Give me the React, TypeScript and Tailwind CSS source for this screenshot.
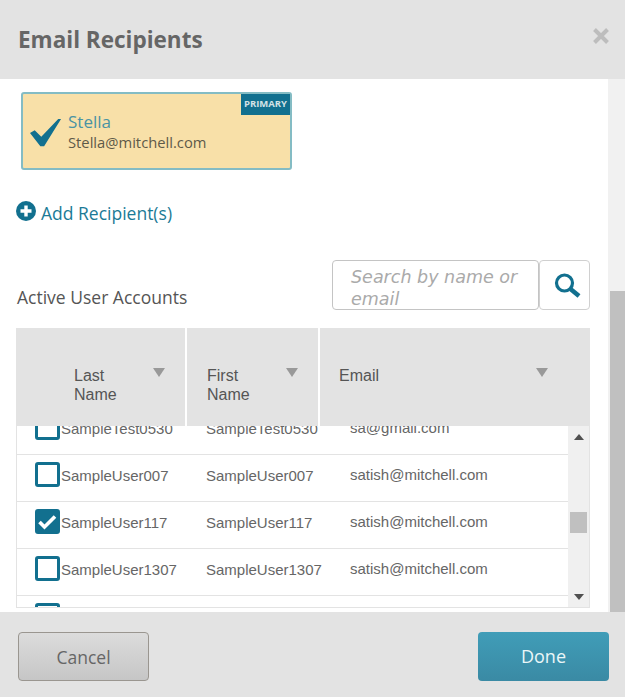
import React from 'react'

type Row = {
  last: string
  first: string
  email: string
  checked?: boolean
}

const rows: Row[] = [
  { last: 'SampleTest0530', first: 'SampleTest0530', email: 'sa@gmail.com' },
  { last: 'SampleUser007', first: 'SampleUser007', email: 'satish@mitchell.com' },
  { last: 'SampleUser117', first: 'SampleUser117', email: 'satish@mitchell.com', checked: true },
  { last: 'SampleUser1307', first: 'SampleUser1307', email: 'satish@mitchell.com' },
  { last: '', first: '', email: '' },
]

const SortArrow = () => (
  <svg width="12" height="9" viewBox="0 0 12 9" className="shrink-0">
    <path d="M0 0h12L6 9z" fill="#999999" />
  </svg>
)

const Checkbox = ({ checked }: { checked?: boolean }) => (
  <div className={`w-[25px] h-[25px] shrink-0 rounded-[3px] border-[3px] border-[#12708f] flex items-center justify-center ${checked ? 'bg-[#12708f]' : 'bg-white'}`}>
    {checked && (
      <svg width="19" height="16" viewBox="0 0 19 16">
        <path d="M1.5 8l5 5L17 2.5" fill="none" stroke="#ffffff" strokeWidth="3.6" />
      </svg>
    )}
  </div>
)

const App = () => {
  return (
    <div className="w-[625px] h-[697px] flex flex-col overflow-hidden bg-white font-['Open_Sans',sans-serif]">
      <div className="h-[79px] shrink-0 bg-[#e3e3e3] flex items-center justify-between pl-[18px] pr-[15px]">
        <h1 className="text-[22.5px] font-bold text-[#666666]">Email Recipients</h1>
        <svg width="18" height="18" viewBox="0 0 18 18" className="mb-[7px]">
          <path d="M2.5 2.5l13 13M15.5 2.5l-13 13" stroke="#bdbdbd" strokeWidth="4" />
        </svg>
      </div>

      <div className="h-[533px] shrink-0 flex">
        <div className="w-[608px] shrink-0 overflow-hidden">
          <div className="pt-[13px] pl-[21px]">
            <div className="relative w-[271px] h-[78px] bg-[#f8e0a8] border-[2px] border-[#84bcc4] rounded-[3px] flex items-center pl-[7px]">
              <svg width="32" height="30" viewBox="0 0 34 30" className="shrink-0 mt-[3px]">
                <path d="M0 15l5-3 7 7L30 0l3 0-18 29h-4z" fill="#12708f" />
              </svg>
              <div className="ml-[6px]">
                <div className="text-[17px] leading-[22px] text-[#4a93a3] translate-y-[1px]">Stella</div>
                <div className="text-[14.75px] leading-[20px] text-[#5e5a48]">Stella@mitchell.com</div>
              </div>
              <div className="absolute top-0 right-0 w-[49px] h-[21px] bg-[#12708f] text-[#d3e2e6] text-[9.5px] font-bold flex items-center justify-center">PRIMARY</div>
            </div>
          </div>

          <div className="mt-[31px] pl-[16px] flex items-center h-[24px]">
            <svg width="20" height="20" viewBox="0 0 20 20" className="shrink-0 -mt-[5px]">
              <circle cx="10" cy="10" r="10" fill="#12708f" />
              <path d="M10 4.5v11M4.5 10h11" stroke="#ffffff" strokeWidth="3.4" />
            </svg>
            <span className="ml-[5px] text-[17.5px] text-[#1b7a96]">Add Recipient(s)</span>
          </div>

          <div className="mt-[35px] pl-[17px] pr-[18px] flex items-center justify-between h-[50px]">
            <span className="text-[17.5px] text-[#555555] mt-[25px]">Active User Accounts</span>
            <div className="flex">
              <div className="w-[207px] h-[50px] border border-[#c4c4c4] rounded-[4px] pl-[18px] pr-[6px] overflow-hidden text-[17.5px] leading-[22px] italic text-[#aaaaaa] font-['DejaVu_Sans',sans-serif] pt-[5px]">
                Search by name or email
              </div>
              <div className="w-[51px] h-[50px] border border-[#d0d0d0] rounded-[4px] flex items-center justify-center">
                <svg width="32" height="32" viewBox="0 0 32 32">
                  <circle cx="15.5" cy="14" r="8" fill="none" stroke="#12708f" strokeWidth="3.2" />
                  <path d="M21.5 20l8.5 7" stroke="#12708f" strokeWidth="4.5" />
                </svg>
              </div>
            </div>
          </div>

          <div className="mt-[18px] ml-[16px] w-[574px] font-['Liberation_Sans',sans-serif]">
            <div className="h-[98px] flex bg-[#e3e3e3] text-[16px] leading-[19px] text-[#555555]">
              <div className="w-[171px] border-r-[2px] border-white pl-[58px] pr-[20px] pt-[38px] flex justify-between items-start">
                <span className="w-[50px]">Last Name</span>
                <span className="mt-[2px]"><SortArrow /></span>
              </div>
              <div className="w-[133px] border-r-[2px] border-white pl-[20px] pr-[20px] pt-[38px] flex justify-between items-start">
                <span className="w-[50px]">First Name</span>
                <span className="mt-[2px]"><SortArrow /></span>
              </div>
              <div className="flex-1 pl-[19px] pr-[42px] pt-[38px] flex justify-between items-start">
                <span>Email</span>
                <span className="mt-[2px]"><SortArrow /></span>
              </div>
            </div>

            <div className="relative h-[182px] overflow-hidden border-x-[1px] border-b-[1px] border-[#e3e3e3]">
              <div className="-mt-[18px] mr-[21px]">
                {rows.map((row, i) => (
                  <div key={i} className="h-[47px] border-b-[1px] border-[#e3e3e3] flex items-center text-[15px] text-[#666666] pl-[18px] pb-[7px]">
                    <Checkbox checked={row.checked} />
                    <span className="w-[145px] shrink-0 ml-[1px] mt-[3px]">{row.last}</span>
                    <span className="w-[144px] shrink-0 mt-[3px]">{row.first}</span>
                    <span className="mt-[1px]">{row.email}</span>
                  </div>
                ))}
              </div>
              <div className="absolute top-0 right-0 bottom-0 w-[21px] bg-[#f0f0f0] flex flex-col items-center justify-between pt-[8px] pb-[7px]">
                <svg width="10" height="6" viewBox="0 0 10 6"><path d="M0 6h10L5 0z" fill="#505050" /></svg>
                <div className="absolute top-[86px] left-[2px] w-[17px] h-[21px] bg-[#c0c0c0]" />
                <svg width="10" height="6" viewBox="0 0 10 6"><path d="M0 0h10L5 6z" fill="#505050" /></svg>
              </div>
            </div>
          </div>
        </div>

        <div className="flex-1 bg-[#f1f1f1] pt-[212px] pl-[2px]">
          <div className="h-[321px] bg-[#c0c0c0]" />
        </div>
      </div>

      <div className="flex-1 bg-[#e3e3e3] flex items-center justify-between pl-[18px] pr-[16px] pt-[4px]">
        <button className="w-[131px] h-[49px] pt-[1px] rounded-[4px] border border-[#9a9690] bg-gradient-to-b from-[#dcdcdc] to-[#c6c6c6] text-[17.5px] text-[#666666]">Cancel</button>
        <button className="w-[131px] h-[49px] rounded-[4px] bg-gradient-to-b from-[#409db8] to-[#3a8aa4] text-[18px] font-medium text-[#eaf6f8]">Done</button>
      </div>
    </div>
  )
}

export default App
